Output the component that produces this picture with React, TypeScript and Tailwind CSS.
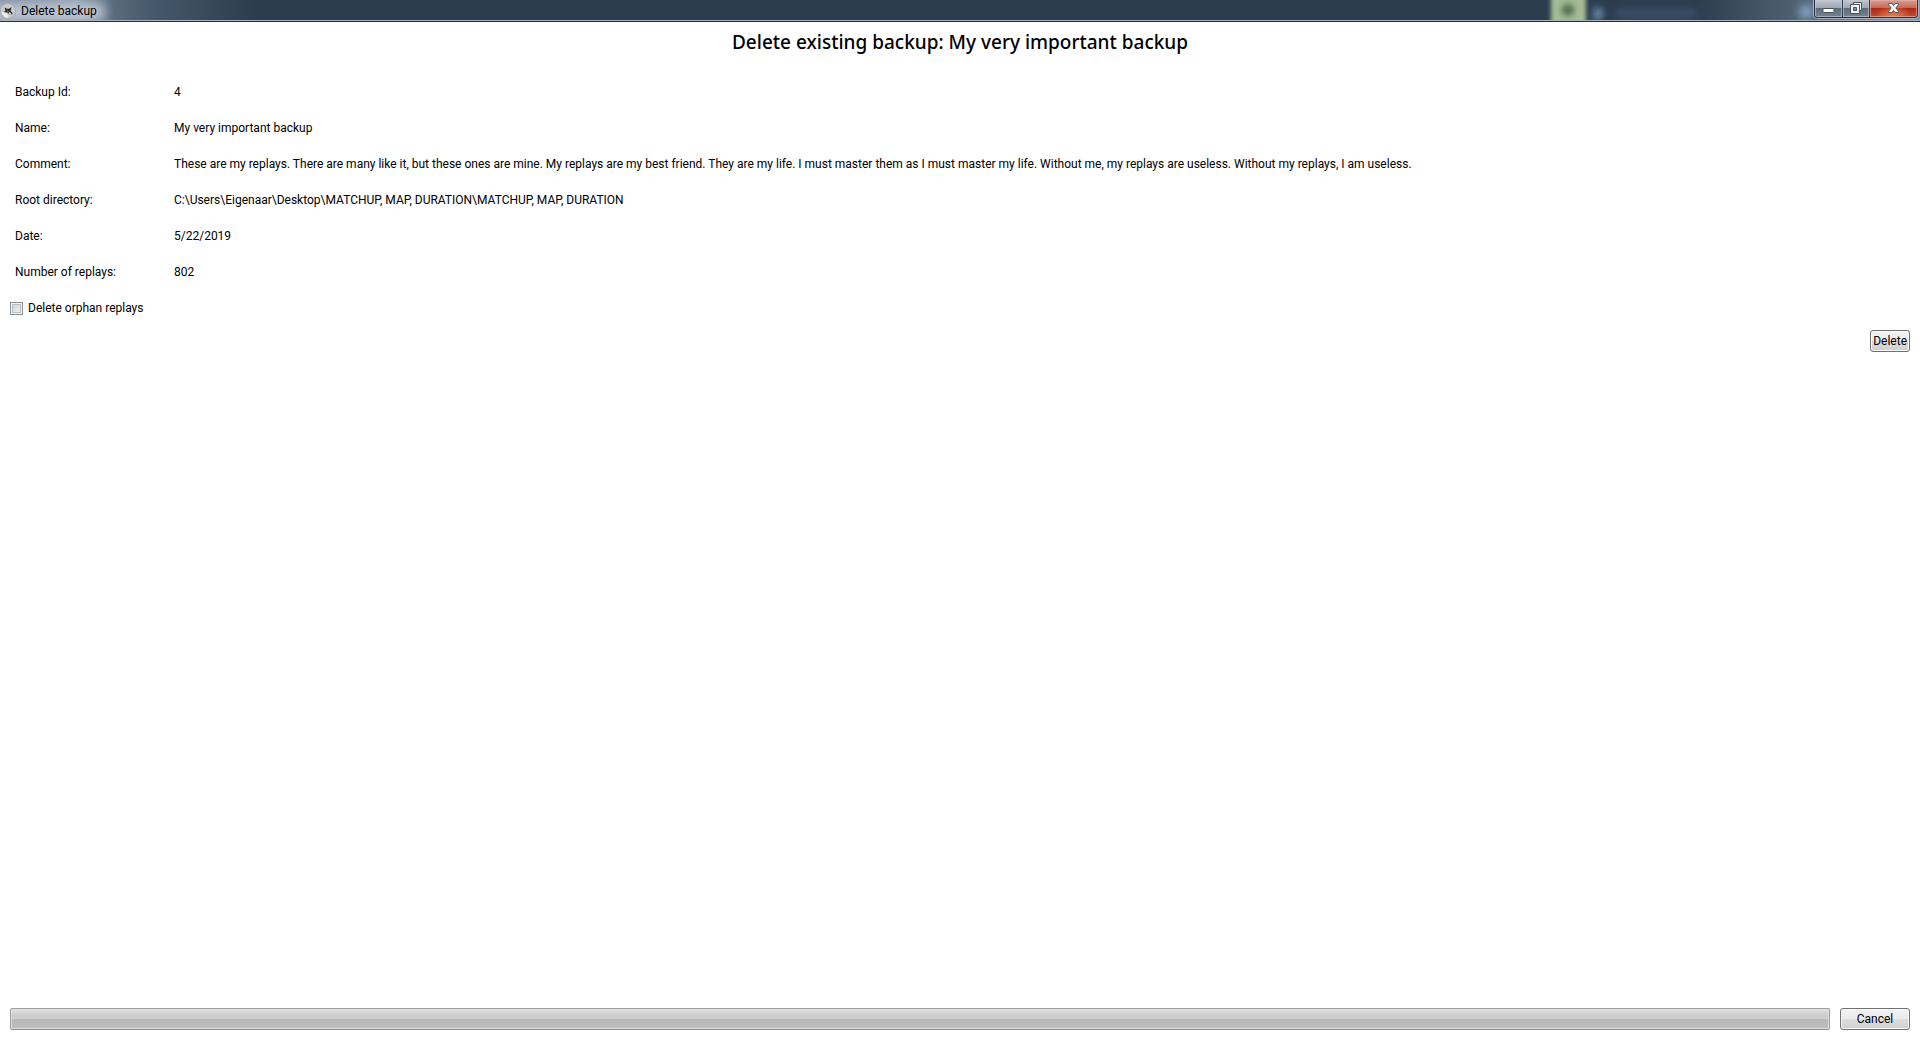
import { useState } from "react";

const comment =
  "These are my replays. There are many like it, but these ones are mine. My replays are my best friend. They are my life. I must master them as I must master my life. Without me, my replays are useless. Without my replays, I am useless.";

const details = [
  { label: "Backup Id:", value: "4" },
  { label: "Name:", value: "My very important backup" },
  { label: "Comment:", value: comment },
  {
    label: "Root directory:",
    value: "C:\\Users\\Eigenaar\\Desktop\\MATCHUP, MAP, DURATION\\MATCHUP, MAP, DURATION",
  },
  { label: "Date:", value: "5/22/2019" },
  { label: "Number of replays:", value: "802" },
];

function AppIcon() {
  return (
    <svg viewBox="0 0 16 16" className="size-4 shrink-0" aria-hidden="true">
      <circle cx="8" cy="8" r="7.6" fill="#c9c9c9" stroke="#a2a5aa" strokeWidth="0.8" />
      <path d="M1.5 9 A7 7 0 0 0 9 15 L6 9Z" fill="#ececec" />
      <path
        d="M4.5 4.5 L6.5 5.5 L8 6 L9.5 5.5 L11.5 4 L11.2 6 L10.5 8 L12.5 10 L12 12 L10.3 9.5 L9 9 L8.5 11 L7.5 9.5 L6 9.5 L3.5 9 L5.5 7.8 Z"
        fill="#2a2a2a"
      />
      <path d="M7 7.5 L8.5 8 L8 9Z" fill="#e0e0e0" />
    </svg>
  );
}

function TitleBar() {
  const glass = "bg-[linear-gradient(#c0c5ce_0%,#a1a8b4_45%,#5f6b7b_50%,#768394_100%)]";
  return (
    <header className="relative flex h-[22px] shrink-0 items-start justify-between overflow-hidden border-b border-[#252e3b] bg-[#2d3d4f] shadow-[inset_0_-1px_0_#a9b1bd]">
      <div className="absolute inset-x-0 top-0 h-5 overflow-hidden" aria-hidden="true">
        <div className="absolute inset-y-0 left-0 w-64 bg-[linear-gradient(90deg,#7b8b9e_0%,#8e9dae_30%,#5a6b7d_44%,#46586b_60%,#2d3d4f_100%)]" />
        <div className="absolute -left-2 top-1 h-4 w-28 bg-[#c3cbd8] blur-[6px]" />
        <div className="absolute right-0 top-0 h-5 w-56 bg-[linear-gradient(90deg,#2d3d4f_0%,#536476_48%,#8493a5_100%)]" />
        <div className="absolute -top-1 right-[334px] h-7 w-[35px] bg-[#a5bc94] blur-[2px]" />
        <div className="absolute right-[346px] top-1 h-3 w-3 rounded-full bg-[#4d6650] blur-[3px]" />
        <div className="absolute right-[317px] top-2 h-3 w-2.5 rotate-12 bg-[#607f9f] blur-[3px]" />
        <div className="absolute right-[224px] top-2.5 h-2 w-20 bg-[#3e5470] blur-[4px]" />
        <div className="absolute right-[108px] top-1.5 h-3 w-3 bg-[#8ba9cb] blur-[4px]" />
      </div>
      <div className="relative flex items-center gap-[5px] pt-[3px]">
        <AppIcon />
        <span className="text-[12px] leading-4 text-black">Delete backup</span>
      </div>
      <div className="relative mr-0.5 flex h-[18px] overflow-hidden rounded-b-[4px] border border-t-0 border-[#252d39] shadow-[0_0_0_1px_#aab3bf]">
        <button
          type="button"
          aria-label="Minimize"
          className={`flex w-7 justify-center border-r border-[#303946] shadow-[inset_0_0_0_1px_#c3c8d0aa] ${glass}`}
        >
          <svg viewBox="0 0 13 18" className="h-[18px] w-[13px]" aria-hidden="true">
            <rect x="1" y="8.5" width="11" height="4" rx="0.5" fill="#fff" stroke="#4b5362" />
          </svg>
        </button>
        <button
          type="button"
          aria-label="Restore"
          className={`flex w-[27px] justify-center border-r border-[#303946] shadow-[inset_0_0_0_1px_#c3c8d0aa] ${glass}`}
        >
          <svg viewBox="0 0 12 18" className="h-[18px] w-3" aria-hidden="true">
            <path d="M3.5 2.5h8v8h-8z" fill="#fff" stroke="#4b5362" />
            <path d="M.5 4.5h9v9h-9z" fill="#f4f4f4" stroke="#4b5362" />
            <path d="M3.5 7.5h3v3h-3z" fill="#8090a3" stroke="#4b5362" />
          </svg>
        </button>
        <button
          type="button"
          aria-label="Close"
          className="flex w-[47px] justify-center bg-[radial-gradient(ellipse_at_bottom,#e9804c_0%,transparent_55%),linear-gradient(#d8a096_0%,#c4695a_45%,#ac2917_50%,#c44a31_100%)] shadow-[inset_0_0_0_1px_#e3b2a9aa]"
        >
          <svg viewBox="0 0 13 18" className="h-[18px] w-[13px]" aria-hidden="true">
            <path
              d="M1.5 3.5h3.3l1.7 2 1.7-2h3.3v1.2L8.8 8l2.7 3.3v1.2H8.2l-1.7-2-1.7 2H1.5v-1.2L4.2 8 1.5 4.7z"
              fill="#fff"
              stroke="#4b5362"
            />
          </svg>
        </button>
      </div>
    </header>
  );
}

const buttonLook =
  "h-[22px] rounded-[3px] border border-[#707070] bg-[linear-gradient(#f2f2f2_0%,#ebebeb_50%,#dddddd_50%,#cfcfcf_100%)] text-[12px] leading-4 text-black shadow-[inset_0_0_0_1px_#fafafa]";

export default function App() {
  const [deleteOrphans, setDeleteOrphans] = useState(false);

  return (
    <div className="flex min-h-screen flex-col bg-white font-[Roboto,'Noto_Sans',sans-serif] text-[12px] leading-4 text-black">
      <TitleBar />
      <main className="flex flex-1 flex-col px-2.5 pb-2.5">
        <h1 className="pb-[19px] pt-[7px] text-center font-['Noto_Sans',sans-serif] text-[19px] font-medium leading-[26px]">
          Delete existing backup: My very important backup
        </h1>
        <dl>
          {details.map(({ label, value }) => (
            <div key={label} className="flex px-[5px] py-2.5">
              <dt className="w-[159px] shrink-0">{label}</dt>
              <dd>{value}</dd>
            </div>
          ))}
        </dl>
        <label className="flex items-center gap-[5px] self-start py-2.5">
          <input
            type="checkbox"
            checked={deleteOrphans}
            onChange={(e) => setDeleteOrphans(e.target.checked)}
            className="size-[13px] appearance-none border border-[#8e8f8f] bg-[linear-gradient(135deg,#cbcfd5,#f6f6f6)] shadow-[inset_0_0_0_1px_#f4f4f4,inset_0_0_0_2px_#b9bec5] checked:bg-[#31639c] checked:bg-none"
          />
          Delete orphan replays
        </label>
        <button type="button" className={`mt-1 self-end px-0.5 ${buttonLook}`}>
          Delete
        </button>
        <footer className="mt-auto flex gap-2.5">
          <div
            role="progressbar"
            aria-label="Delete progress"
            aria-valuemin={0}
            aria-valuemax={100}
            aria-valuenow={0}
            className="h-[22px] flex-1 rounded-[2px] border border-[#a0a0a0] border-b-[#8c8c8c] bg-[linear-gradient(#e4e4e4_0%,#cdcdcd_30%,#cfcfcf_52%,#b8b8b8_52%,#bebebe_100%)] shadow-[inset_0_0_0_1px_#dedede]"
          />
          <button type="button" className={`w-[70px] ${buttonLook}`}>
            Cancel
          </button>
        </footer>
      </main>
    </div>
  );
}
